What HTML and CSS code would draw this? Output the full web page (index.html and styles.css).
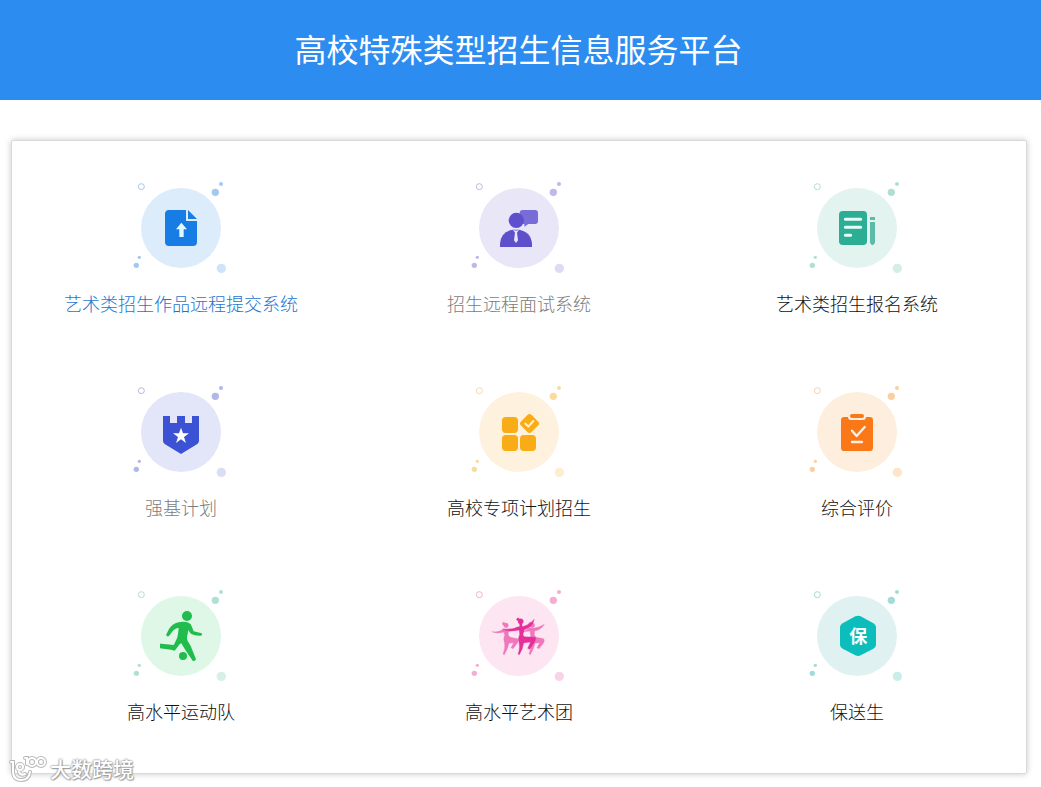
FILE: index.html
```html
<!DOCTYPE html>
<html lang="zh-CN">
<head>
<meta charset="utf-8">
<meta name="viewport" content="width=device-width, initial-scale=1">
<title>高校特殊类型招生信息服务平台</title>
<link rel="stylesheet" href="styles.css">
</head>
<body>
<svg class="defs" aria-hidden="true">
  <symbol id="bubble" viewBox="3 0 330 318">
    <circle class="disc" cx="168" cy="159" r="120"/>
    <circle class="ring" cx="49" cy="35" r="9"/>
    <circle class="dot" cx="271" cy="52" r="11"/>
    <circle class="dot" cx="288" cy="27" r="6"/>
    <circle class="dot" cx="43" cy="247" r="5"/>
    <circle class="dot" cx="34" cy="271" r="8"/>
    <circle class="pale" cx="289" cy="280" r="14"/>
  </symbol>
</svg>
<header class="header">
  <h1 class="title">高校特殊类型招生信息服务平台</h1>
</header>
<main class="card">
  <a class="tile tile-blue" href="#">
    <svg class="icon" viewBox="3 0 330 318" aria-hidden="true">
      <use href="#bubble" x="3" y="0" width="330" height="318"/>
      <path fill="#177ce3" d="M132 105h51v33h33v63q0 12-12 12h-72q-12 0-12-12v-84q0-12 12-12z"/>
      <path fill="#177ce3" d="M189 105l27 27h-27z"/>
      <path fill="#e4f8ff" d="M169 143l17 20h-10v23h-13v-23h-10z"/>
    </svg>
    <span class="label">艺术类招生作品远程提交系统</span>
  </a>
  <a class="tile tile-violet" href="#">
    <svg class="icon" viewBox="3 0 330 318" aria-hidden="true">
      <use href="#bubble" x="3" y="0" width="330" height="318"/>
      <path fill="#786dd8" d="M179 105h37q9 0 9 9v24q0 9-9 9h-20l-12 8v-8h-5q-9 0-9-9v-24q0-9 9-9z"/>
      <circle fill="#5e50cd" cx="160" cy="136" r="23"/>
      <path fill="#5e50cd" d="M111 216v-10q3-36 38-42h19q36 6 39 42v10z"/>
      <path fill="#e9e7f8" d="M149 164q9 5 19 0l-6 9 3 23-6 8-6-8 3-23z"/>
    </svg>
    <span class="label">招生远程面试系统</span>
  </a>
  <a class="tile tile-green" href="#">
    <svg class="icon" viewBox="3 0 330 318" aria-hidden="true">
      <use href="#bubble" x="3" y="0" width="330" height="318"/>
      <rect fill="#2cae94" x="114" y="108" width="84" height="102" rx="11"/>
      <path stroke="#e8fff9" stroke-width="9" stroke-linecap="round" d="M133 133h46M133 157h46M133 181h16"/>
      <path fill="#5dbba7" d="M207 126h15v9h-15zM207 141h15v62l-5 7h-5l-5-7z"/>
    </svg>
    <span class="label">艺术类招生报名系统</span>
  </a>
  <a class="tile tile-indigo" href="#">
    <svg class="icon" viewBox="3 0 330 318" aria-hidden="true">
      <use href="#bubble" x="3" y="0" width="330" height="318"/>
      <path fill="#3c52d5" d="M114 111h21v21h21v-21h24v21h21v-21h21v75q0 5-5 9l-49 30-49-30q-5-4-5-9z"/>
      <path fill="#fff" d="M168 146l6 17h18l-15 11 6 18-15-11-15 11 6-18-15-11h18z"/>
    </svg>
    <span class="label">强基计划</span>
  </a>
  <a class="tile tile-yellow" href="#">
    <svg class="icon" viewBox="3 0 330 318" aria-hidden="true">
      <use href="#bubble" x="3" y="0" width="330" height="318"/>
      <g fill="#faac17">
        <rect x="117" y="114" width="48" height="48" rx="11"/>
        <rect x="117" y="168" width="48" height="48" rx="11"/>
        <rect x="171" y="168" width="48" height="48" rx="11"/>
        <rect x="177" y="111" width="45" height="45" rx="9" transform="rotate(45 199.500 133.500)"/>
      </g>
      <path class="tick" stroke="#fff3d8" stroke-width="6" d="M187 134l9 9 15-17"/>
    </svg>
    <span class="label">高校专项计划招生</span>
  </a>
  <a class="tile tile-orange" href="#">
    <svg class="icon" viewBox="3 0 330 318" aria-hidden="true">
      <use href="#bubble" x="3" y="0" width="330" height="318"/>
      <path fill="#fb7818" d="M130 114h11q0 9 9 9h36q9 0 9-9h11q10 0 10 10v82q0 10-10 10h-76q-10 0-10-10v-82q0-10 10-10z"/>
      <rect fill="#fb7818" x="147" y="105" width="42" height="12" rx="6"/>
      <path class="tick" stroke="#fff0df" stroke-width="7" d="M153 155l14 16 24-27M153 189h30"/>
    </svg>
    <span class="label">综合评价</span>
  </a>
  <a class="tile tile-lime" href="#">
    <svg class="icon" viewBox="3 0 330 318" aria-hidden="true">
      <use href="#bubble" x="3" y="0" width="330" height="318"/>
      <g fill="#20bd4c">
        <circle cx="186" cy="99" r="15"/>
        <circle cx="174" cy="219" r="12"/>
        <path d="M123 156l9-18q8-14 23-19 21-6 36 0 7 3 10 13l5 13 24 6q3 3-1 7-20 1-30-5-6-4-9-12l-4 22q-1 8 4 14 9 12 14 29l9 23q-3 7-10 4l-22-32-12-20q-5 1-9 8l-11 14q-6-2-11-3l-33-4v-12q1-3 4-2l37 4q3-5 10-20 3-8 5-31-12 1-20 12l-9 12q-5 4-9-3z"/>
      </g>
    </svg>
    <span class="label">高水平运动队</span>
  </a>
  <a class="tile tile-pink" href="#">
    <svg class="icon" viewBox="3 0 330 318" aria-hidden="true">
      <use href="#bubble" x="3" y="0" width="330" height="318"/>
      <g transform="translate(78 87)">
        <g fill="#ee78bb" stroke="#ee78bb">
          <circle cx="51" cy="40" r="7"/>
          <circle cx="44" cy="35" r="4"/>
          <path d="M8 59Q28 63 44 51L60 50L78 50Q68 57 58 59L58 70L64 76L86 80Q90 84 86 92L72 110L66 107L74 92L60 94Q56 112 46 128L42 126Q50 106 46 90Q42 82 47 70L45 60Q26 67 8 59Z"/>
          <circle cx="130" cy="40" r="7"/>
          <circle cx="123" cy="35" r="4"/>
          <path d="M100 60Q112 56 120 48L136 48Q152 46 166 37Q156 54 137 57L136 70L142 76L164 80Q168 84 164 92L150 110L144 107L152 92L138 94Q134 112 124 128L120 126Q128 106 124 90Q120 82 125 70L123 57L100 60Z"/>
        </g>
        <g fill="#e62d9c" stroke="#e62d9c">
          <circle cx="95" cy="28" r="8"/>
          <circle cx="87" cy="22" r="4"/>
          <path d="M92 34h7v12h-7z"/>
          <path d="M40 51Q66 56 85 45L104 43Q122 38 136 22Q130 48 106 53L103 64Q100 70 106 74L138 76Q142 80 138 88L122 112L116 109L125 90L104 93Q102 110 91 128L87 126Q94 110 90 90Q86 80 92 68Q92 60 90 54Q64 62 40 51Z"/>
        </g>
      </g>
    </svg>
    <span class="label">高水平艺术团</span>
  </a>
  <a class="tile tile-teal" href="#">
    <svg class="icon" viewBox="3 0 330 318" aria-hidden="true">
      <use href="#bubble" x="3" y="0" width="330" height="318"/>
      <path fill="#0bbebb" d="M163 100q8-3 16 0l38 21q8 5 8 12v52q0 7-8 12l-38 20q-8 4-16 0l-38-20q-8-5-8-12v-52q0-7 8-12z"/>
      <text class="badge-text" x="172" y="180">保</text>
    </svg>
    <span class="label">保送生</span>
  </a>
</main>
<div class="watermark">
  <svg class="watermark-logo" viewBox="0 0 40 30" aria-hidden="true">
    <defs>
      <g id="mark">
        <path d="M4 9h2v11q1 7 8 7 8 0 9-8M12 19q2 4 6 2"/>
        <circle cx="13" cy="14" r="3"/>
        <path d="M18 5h2v6"/>
        <circle cx="25" cy="9" r="4"/>
        <circle cx="34" cy="9" r="4"/>
      </g>
    </defs>
    <use class="watermark-edge" href="#mark"/>
    <use class="watermark-line" href="#mark"/>
  </svg>
  <span class="watermark-text">大数跨境</span>
</div>
</body>
</html>
```
FILE: styles.css
```css
* {
  box-sizing: border-box;
}

body {
  margin: 0;
  min-height: 100vh;
  position: relative;
  background: #fff;
  color: #222;
  font-family: "Noto Sans CJK SC", sans-serif;
}

.defs {
  position: absolute;
  width: 0;
  height: 0;
}

.header {
  display: flex;
  align-items: center;
  justify-content: center;
  min-height: 100px;
  padding: 0 4px 4px 0;
  background: #2d8cf0;
}

.title {
  margin: 0;
  color: #fff;
  font-size: 32px;
  line-height: 48px;
  font-weight: 400;
}

.card {
  display: grid;
  grid-template-columns: repeat(3, 1fr);
  margin: 40px 14px 0 11px;
  padding-bottom: 20px;
  border: 1px solid #d9d9d9;
  border-radius: 2px;
  box-shadow: 0 0 6px rgba(0, 0, 0, 0.22);
}

.tile {
  display: flex;
  flex-direction: column;
  align-items: center;
  gap: 10px;
  padding: 34px 8px 30px;
  color: #111;
  text-decoration: none;
}

.label {
  font-size: 18px;
  font-weight: 300;
  line-height: 24px;
}

.icon {
  width: 110px;
  height: 106px;
}

.disc { fill: var(--disc); }
.dot { fill: var(--dot); }
.pale { fill: var(--pale); }
.ring {
  fill: none;
  stroke: var(--dot);
  stroke-width: 3px;
}

.tick {
  fill: none;
  stroke-linecap: round;
  stroke-linejoin: round;
}

.tile-blue { --disc: #ddecfb; --dot: #a2c9f0; --pale: #cfe4fa; color: #1f74d0; }
.tile-violet { --disc: #e8e6f7; --dot: #bfb9e8; --pale: #dedbf4; color: #7c7c7c; }
.tile-green { --disc: #e3f4f0; --dot: #b0dfd3; --pale: #d5efe7; }
.tile-indigo { --disc: #e3e6f9; --dot: #b0b8e8; --pale: #d9def5; color: #7c7c7c; }
.tile-yellow { --disc: #fef2de; --dot: #fadb9e; --pale: #feedd0; }
.tile-orange { --disc: #feeede; --dot: #fad0a2; --pale: #fee5c9; }
.tile-lime { --disc: #dff7e6; --dot: #b2ded5; --pale: #d6efe9; }
.tile-pink { --disc: #fde5f2; --dot: #f4aed3; --pale: #f9d3e7; }
.tile-teal { --disc: #dff1f1; --dot: #a2dcda; --pale: #c9eeea; }

.badge-text {
  fill: #fff;
  font-size: 54px;
  font-weight: 700;
  text-anchor: middle;
}

.watermark {
  position: absolute;
  left: 7px;
  bottom: 4px;
  display: flex;
  align-items: center;
  gap: 3px;
}

.watermark-logo {
  width: 40px;
  height: 30px;
}

.watermark-edge,
.watermark-line {
  fill: none;
  stroke-linecap: round;
}

.watermark-edge {
  stroke: #b9b9b9;
  stroke-width: 4px;
}

.watermark-line {
  stroke: #fff;
  stroke-width: 2px;
}

.watermark-text {
  color: #fff;
  font-size: 21px;
  line-height: 30px;
  font-weight: 500;
  text-shadow: 0 0 2px #888, 0 0 2px #999, 1px 1px 1px #aaa;
}
```
